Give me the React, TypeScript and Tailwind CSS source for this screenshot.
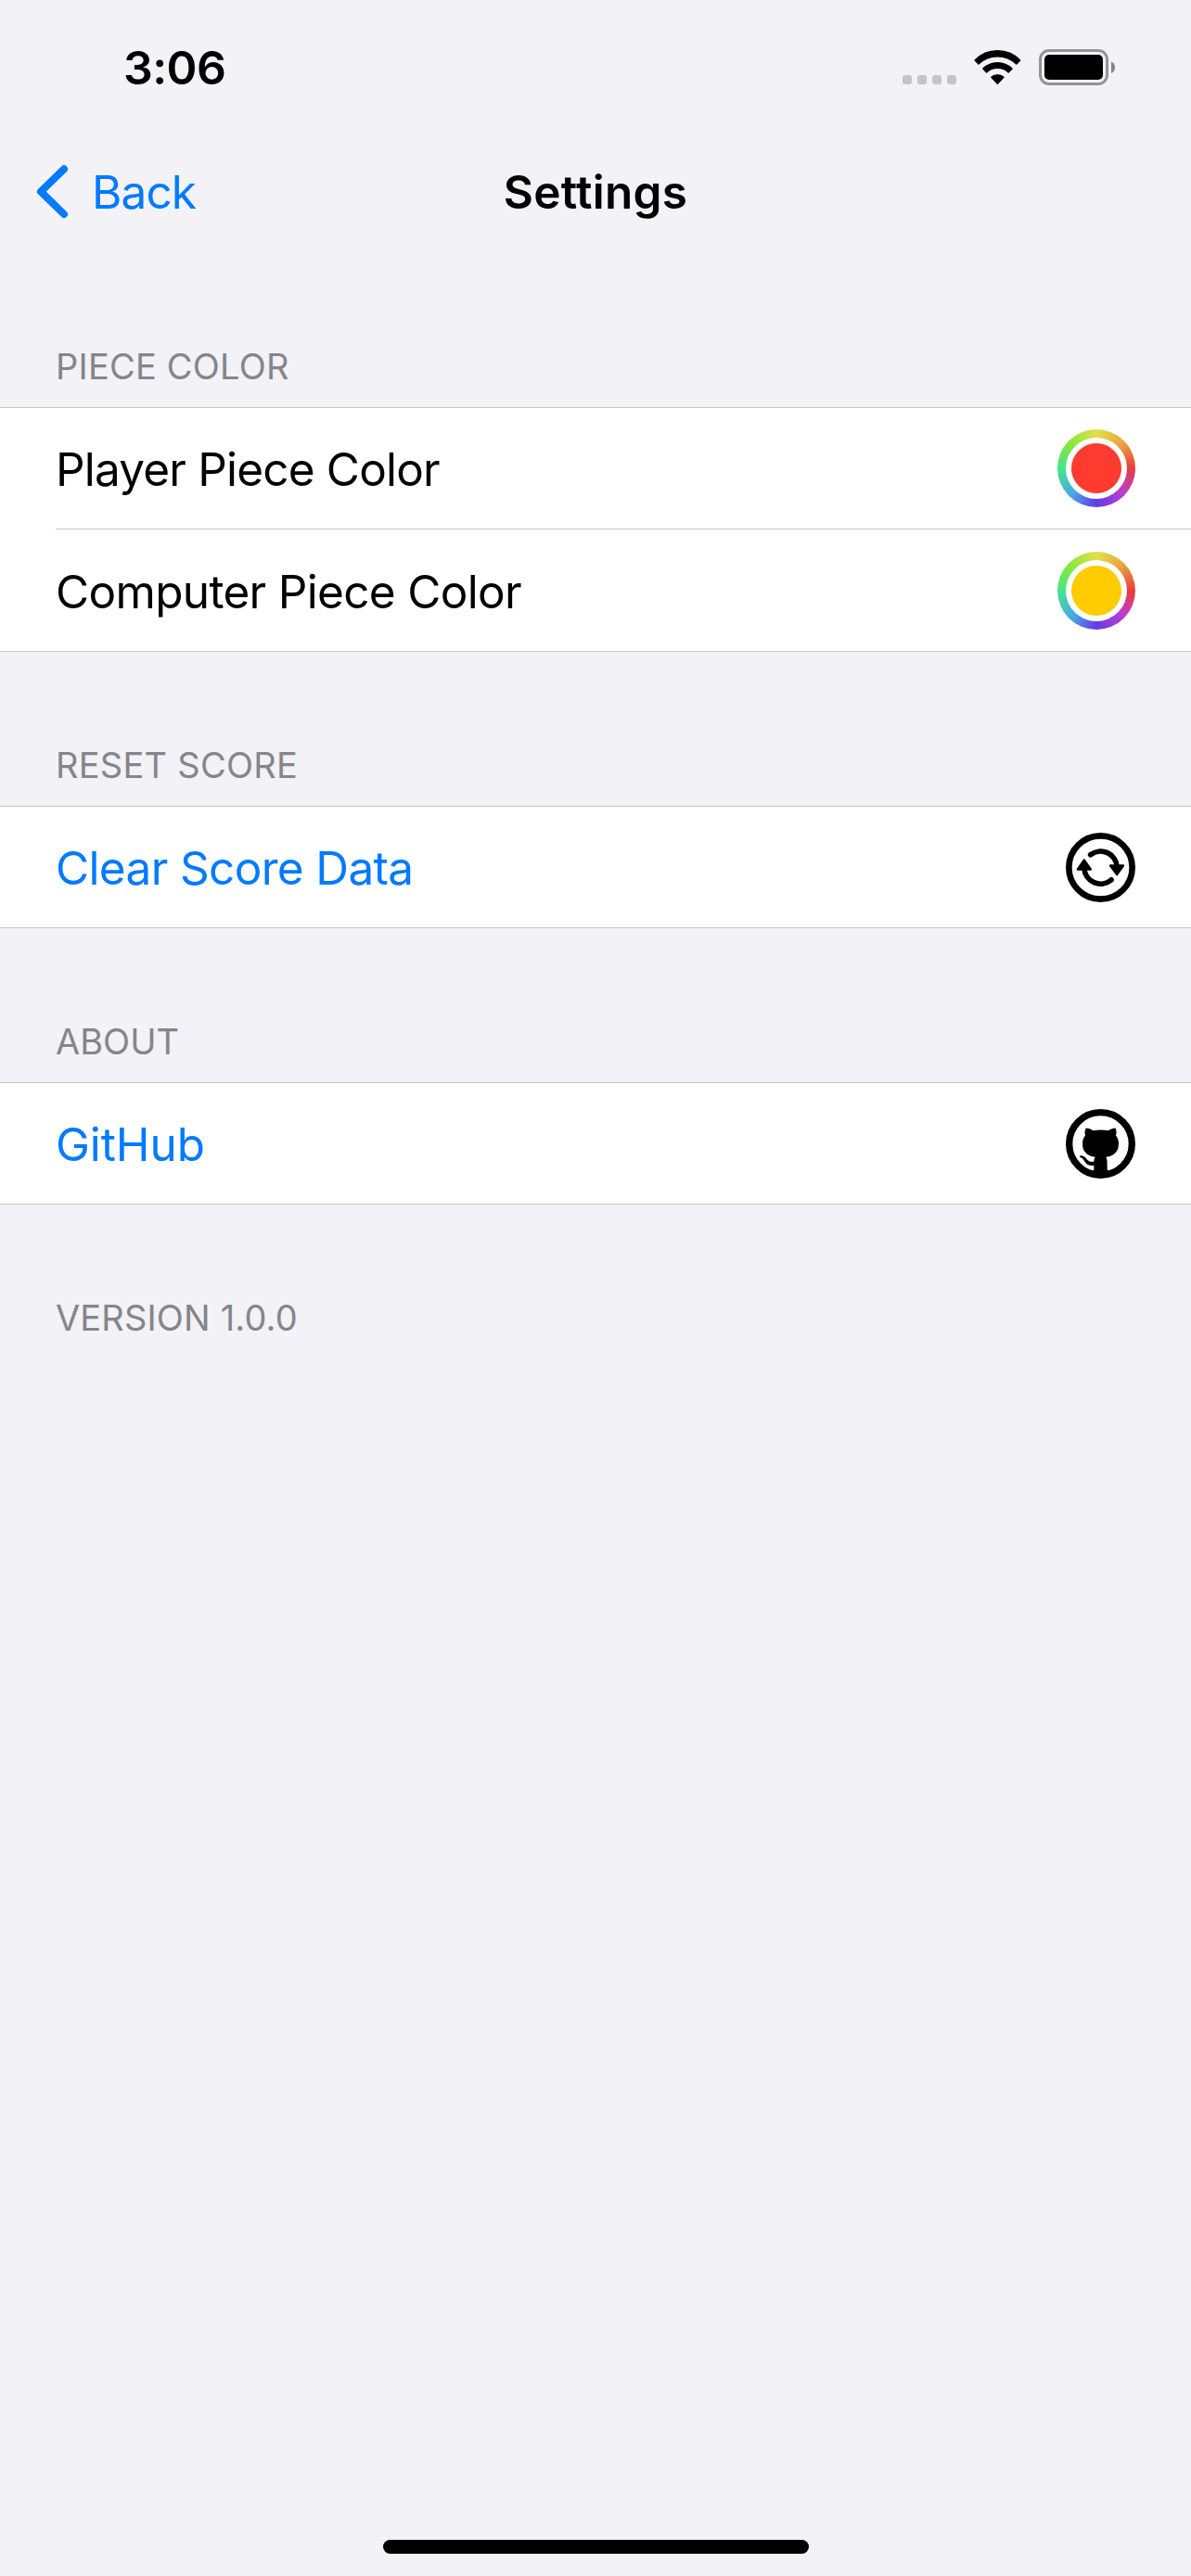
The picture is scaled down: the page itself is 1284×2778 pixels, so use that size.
import type { ReactNode } from "react";

function StatusBar() {
  return (
    <div className="flex h-[141px] items-start justify-between pr-[82px] pl-[133px]">
      <div className="mt-[43px] text-[50px] leading-[60px] font-semibold tracking-[-0.58px]">3:06</div>
      <div className="mt-[53px] flex items-start">
        <div className="mt-7 mr-[19px] flex gap-1.5">
          <i className="size-2.5 rounded-[3px] bg-[#c3c3c8]" />
          <i className="size-2.5 rounded-[3px] bg-[#c3c3c8]" />
          <i className="size-2.5 rounded-[3px] bg-[#c3c3c8]" />
          <i className="size-2.5 rounded-[3px] bg-[#c3c3c8]" />
        </div>
        <svg className="mr-[19px] h-10 w-[51px]" viewBox="0 0 51 40" stroke="#000" strokeWidth="1.4" strokeLinejoin="round">
          <path d="M1.1 12A34 34 0 0 1 49.7 12L45.8 15.9A29.5 29.5 0 0 0 5 15.9Z" />
          <path d="M9.8 21A22.2 22.2 0 0 1 41 21L37.2 24.9A17.5 17.5 0 0 0 13.6 24.9Z" />
          <path d="M18.8 30.2A10.5 10.5 0 0 1 32 30.2L25.4 37.2Z" />
        </svg>
        <svg className="h-10 w-[82px]" viewBox="0 0 82 40">
          <rect x="1.5" y="1.5" width="72" height="36" rx="9.5" fill="none" stroke="#949497" strokeWidth="3" />
          <rect x="6" y="6" width="63" height="27" rx="5" />
          <path d="M78 13.5Q82 15 82 19.7Q82 24.5 78 26Z" fill="#87878a" />
        </svg>
      </div>
    </div>
  );
}

function NavBar() {
  return (
    <div className="grid h-[132px] grid-cols-[1fr_auto_1fr] items-center text-[49.5px] leading-[60px]">
      <div className="flex items-center pl-[38px] text-[#007aff]">
        <svg className="mr-[23px] h-[60px] w-[38px]" viewBox="0 0 38 60" fill="none" stroke="currentColor" strokeWidth="8" strokeLinecap="round" strokeLinejoin="round">
          <path d="M31 5.3L6 29.7L31 54" />
        </svg>
        <span className="tracking-[-0.9px]">Back</span>
      </div>
      <h1 className="font-semibold tracking-[0.28px]">Settings</h1>
      <span />
    </div>
  );
}

function Header({ children }: { children: ReactNode }) {
  return <h2 className="h-[166px] pt-[100px] text-[38px] leading-[44px] text-[#85858b]">{children}</h2>;
}

function Rows({ children }: { children: ReactNode }) {
  return <div className="border-y border-[#c6c6c8] bg-white">{children}</div>;
}

function Wheel({ color }: { color: string }) {
  return (
    <div className="flex size-[84px] items-center justify-center rounded-full bg-[conic-gradient(#e0e04a,#e8a640_45deg,#e83e3e_90deg,#be3cd2_132deg,#643ce6_180deg,#48a6e8_222deg,#46e68c_270deg,#7ee83e_308deg,#e0e04a)]">
      <div className="flex size-[66px] items-center justify-center rounded-full bg-white">
        <div className={`size-[54px] rounded-full ${color}`} />
      </div>
    </div>
  );
}

function SyncIcon() {
  return (
    <svg className="size-[75px]" viewBox="57 53.5 225 225">
      <circle cx="169.5" cy="166" r="102.5" fill="none" stroke="#000" strokeWidth="20" />
      <g fill="none" stroke="#000" strokeWidth="17" strokeLinecap="round">
        <path d="M137 125A53 53 0 0 1 222.5 164" />
        <path d="M204 206A53 53 0 0 1 116.5 168" />
      </g>
      <g stroke="#000" strokeWidth="7" strokeLinejoin="round">
        <path d="M201 160H243L222.5 189Z" />
        <path d="M95.5 172H137.5L116.5 142Z" />
      </g>
    </svg>
  );
}

function GitHubIcon() {
  return (
    <svg className="size-[75px]" viewBox="57 47.5 225 225">
      <circle cx="169.5" cy="160" r="101.5" fill="none" stroke="#000" strokeWidth="22" />
      <path d="M122 109Q134 109 146 117Q170 113 194 117Q206 109 218 109Q223 122 219 133Q228 144 228 160Q228 188 205 198Q196 202 187 203Q191 208 191 220V241Q191 249 201 250V262H138V250Q148 249 148 241V220Q148 208 152 203Q143 202 134 198Q111 188 111 160Q111 144 120 133Q116 122 122 109Z" />
      <path d="M150 230Q128 234 118 217Q113 206 103 203Q101 200 103 198Q117 197 126 211Q133 221 150 217Z" />
    </svg>
  );
}

export default function App() {
  return (
    <div className="flex h-[2778px] w-[1284px] flex-col bg-[#f2f2f7] font-['Inter','Liberation_Sans',sans-serif] text-black">
      <StatusBar />
      <NavBar />
      <main className="grow text-[49.5px] leading-[60px]">
        <Header><span className="ml-[60px] tracking-[0.21px]">PIECE COLOR</span></Header>
        <Rows>
          <div className="flex h-[130px] items-center justify-between pr-[60px] pl-[60px]">
            <span className="pt-0.5 tracking-[-0.82px]">Player Piece Color</span>
            <Wheel color="bg-[#ff3b30]" />
          </div>
          <div className="ml-[60px] flex h-[132px] items-center justify-between border-t border-[#c6c6c8] pr-[60px]">
            <span className="pt-0.5 tracking-[-0.68px]">Computer Piece Color</span>
            <Wheel color="bg-[#ffcc00]" />
          </div>
        </Rows>
        <Header><span className="ml-[60px] tracking-[0.26px]">RESET SCORE</span></Header>
        <Rows>
          <div className="flex h-[130px] items-center justify-between pr-[60px] pl-[60px]">
            <span className="pt-0.5 tracking-[-0.65px] text-[#007aff]">Clear Score Data</span>
            <SyncIcon />
          </div>
        </Rows>
        <Header><span className="ml-[60px] tracking-[0]">ABOUT</span></Header>
        <Rows>
          <div className="flex h-[130px] items-center justify-between pr-[60px] pl-[60px]">
            <span className="pt-0.5 tracking-[-0.1px] text-[#007aff]">GitHub</span>
            <GitHubIcon />
          </div>
        </Rows>
        <Header><span className="ml-[60px] tracking-[0.15px]">VERSION 1.0.0</span></Header>
      </main>
      <div className="mb-6 h-[15px] w-[459px] self-center rounded-full bg-black" />
    </div>
  );
}
